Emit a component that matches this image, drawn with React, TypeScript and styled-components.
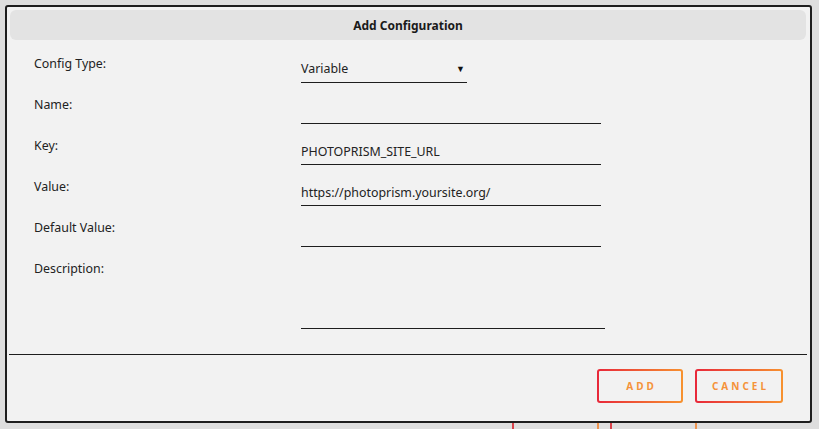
import styled, {createGlobalStyle} from 'styled-components';

const GlobalStyle = createGlobalStyle`
  html, body {
    margin: 0;
    padding: 0;
    background: #dedede;
  }
  body {
    font-family: "Noto Sans", "Liberation Sans", sans-serif;
    color: #1e1e1e;
  }
  * {
    box-sizing: border-box;
  }
`

interface Field {
  label: string;
  value: string;
  kind: 'select' | 'text' | 'area';
}

const FIELDS: Field[] = [
  {label: 'Config Type:', value: 'Variable', kind: 'select'},
  {label: 'Name:', value: '', kind: 'text'},
  {label: 'Key:', value: 'PHOTOPRISM_SITE_URL', kind: 'text'},
  {label: 'Value:', value: 'https://photoprism.yoursite.org/', kind: 'text'},
  {label: 'Default Value:', value: '', kind: 'text'},
  {label: 'Description:', value: '', kind: 'area'},
];

const App = () => {
  return (
    <Page>
      <GlobalStyle />
      <Dialog>
        <Header>Add Configuration</Header>
        <Form>
          {FIELDS.map((field) => (
            <Row key={field.label} $tall={field.kind === 'area'}>
              <Label>{field.label}</Label>
              {field.kind === 'select' ? (
                <Select>
                  <span>{field.value}</span>
                  <Arrow>▼</Arrow>
                </Select>
              ) : field.kind === 'area' ? (
                <TextArea defaultValue={field.value} />
              ) : (
                <Input defaultValue={field.value} />
              )}
            </Row>
          ))}
        </Form>
        <Footer>
          <OutlineBtn $width={86}>ADD</OutlineBtn>
          <OutlineBtn $width={88}>CANCEL</OutlineBtn>
        </Footer>
      </Dialog>
      <Behind>
        <GhostBtn />
        <GhostBtn />
      </Behind>
    </Page>
  );
}

export default App;

const Page = styled.div`
  height: 100vh;
  overflow: hidden;
  padding: 5px 0 0 5px;
`

const Dialog = styled.div`
  width: 807px;
  height: 418px;
  border: 2px solid #1e1e1e;
  border-radius: 3px;
  background: #f2f2f2;
  padding: 3px;
  display: flex;
  flex-direction: column;
`

const Header = styled.div`
  height: 30px;
  margin-right: 1px;
  border-radius: 6px;
  background: #e3e3e3;
  display: flex;
  align-items: center;
  justify-content: center;
  padding-top: 1px;
  font-size: 12px;
  font-weight: 700;
  color: #1a1a1a;
`

const Form = styled.div`
  padding: 14px 0 0 24px;
  display: flex;
  flex-direction: column;
`

const Row = styled.div<{$tall?: boolean}>`
  display: grid;
  grid-template-columns: 267px 1fr;
  height: ${p => (p.$tall ? '69px' : '41px')};
  align-items: start;
`

const Label = styled.div`
  padding-top: 2px;
  font-size: 12.4px;
  line-height: 16px;
  color: #222;
`

const fieldBase = `
  margin-top: 5px;
  border: none;
  border-bottom: 1px solid #1e1e1e;
  background: transparent;
  font-family: "Noto Sans", "Liberation Sans", sans-serif;
  font-size: 12.4px;
  color: #222;
  outline: none;
  padding: 0;
`

const Input = styled.input`
  ${fieldBase}
  width: 300px;
  height: 24px;
  line-height: 18px;
  padding-top: 1px;
  padding-bottom: 4px;
`

const Select = styled.div`
  ${fieldBase}
  width: 166px;
  height: 24px;
  line-height: 18px;
  padding-top: 1px;
  padding-bottom: 4px;
  padding-right: 2px;
  display: flex;
  justify-content: space-between;
  align-items: center;
`

const Arrow = styled.span`
  font-size: 9px;
  color: #111;
`

const TextArea = styled.textarea`
  ${fieldBase}
  width: 304px;
  height: 65px;
  resize: none;
  line-height: 18px;
`

const Footer = styled.div`
  margin-top: auto;
  margin-left: -1px;
  border-top: 1px solid #1e1e1e;
  height: 64px;
  display: flex;
  justify-content: flex-end;
  align-items: flex-start;
  gap: 12px;
  padding: 14px 24px 0 0;
`

const OutlineBtn = styled.button<{$width: number}>`
  width: ${p => p.$width}px;
  height: 34px;
  border: 2px solid transparent;
  border-radius: 3px;
  background:
    linear-gradient(#f2f2f2, #f2f2f2) padding-box,
    linear-gradient(90deg, #e8283a, #f7922f) border-box;
  color: #f5923a;
  font-family: "Noto Sans", "Liberation Sans", sans-serif;
  font-size: 10px;
  font-weight: 700;
  letter-spacing: 3px;
  padding: 0 0 0 3px;
  cursor: pointer;
`

const Behind = styled.div`
  display: flex;
  gap: 11px;
  padding-left: 507px;
`

const GhostBtn = styled.div`
  width: 87px;
  height: 20px;
  border-left: 2px solid #d9434b;
  border-right: 2px solid #ee9550;
`
